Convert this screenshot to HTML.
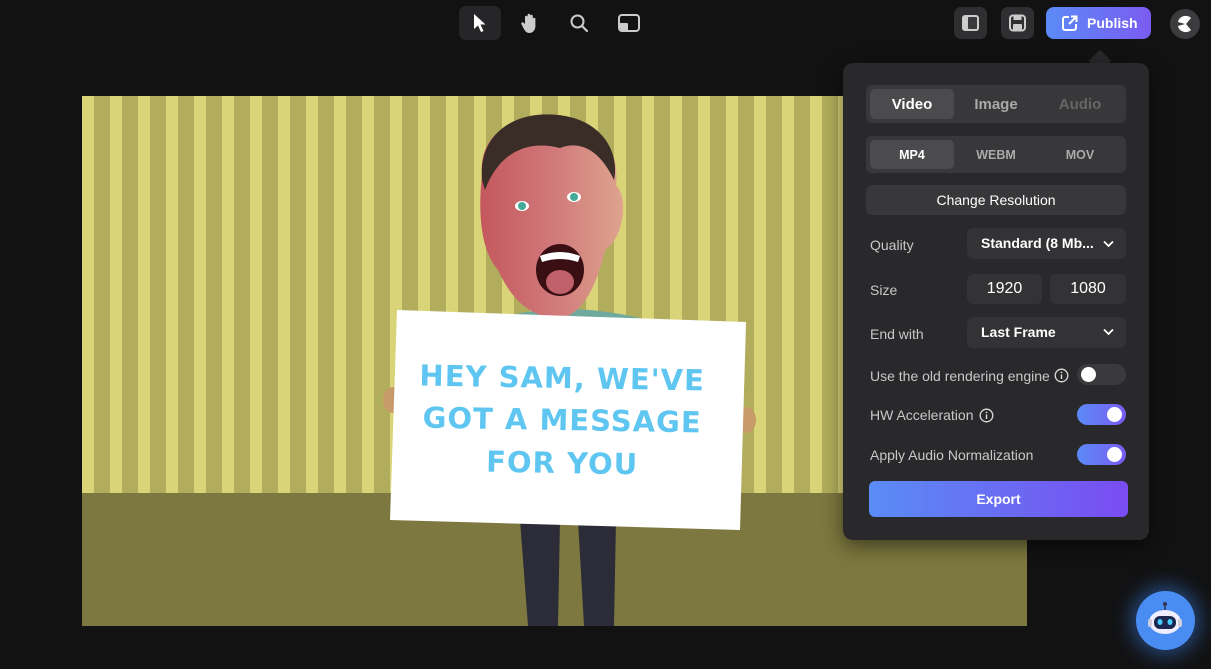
<!DOCTYPE html>
<html><head><meta charset="utf-8"><style>
*{box-sizing:border-box;margin:0;padding:0}
body{width:1211px;height:669px;background:#121213;font-family:"Liberation Sans",sans-serif;position:relative;overflow:hidden;color:#ddd}
.abs{position:absolute}
.canvas{left:82px;top:96px;width:945px;height:530px;background:repeating-linear-gradient(90deg,#d8d477 0 12px,#b2ad5c 12px 28px);overflow:hidden}
.floor{left:0;top:397px;width:945px;height:133px;background:#7d783f}
.tb{border-radius:7px}
.panel{left:843px;top:63px;width:306px;height:477px;background:#29292b;border-radius:10px;box-shadow:0 6px 20px rgba(0,0,0,.5)}
.seg{background:#38383a;border-radius:6px;display:flex;align-items:center;padding:0 4px}
.seg div{flex:1;text-align:center;font-weight:bold;color:#aaa}
.seg .on{background:#4b4b4d;border-radius:5px;color:#fff;align-self:stretch;display:flex;align-items:center;justify-content:center}
.lbl{font-size:14px;color:#c8c8c8}
.box{background:#333335;border-radius:6px;color:#fff}
.tog{width:49px;height:21px;border-radius:11px}
.knob{position:absolute;top:3px;width:15px;height:15px;border-radius:50%;background:#fff}
</style></head><body>

<div class="abs tb" style="left:459px;top:6px;width:42px;height:34px;background:#262628"></div>
<svg class="abs" style="left:472px;top:13px" width="16" height="20" viewBox="0 0 16 20"><path d="M2 1 L2 16 L6 12.5 L9 19 L11.5 18 L8.5 11.5 L13.5 11.5 Z" fill="#fff"/></svg>
<svg class="abs" style="left:520px;top:12px" width="20" height="22" viewBox="0 0 20 22"><path d="M5 12 V5 a1.3 1.3 0 0 1 2.6 0 V10 V3 a1.3 1.3 0 0 1 2.6 0 V10 V4 a1.3 1.3 0 0 1 2.6 0 V11 V7 a1.3 1.3 0 0 1 2.6 0 V14 c0 4 -2.5 7 -6 7 c-3 0 -4.5 -2 -6 -5 l-2 -4 a1.3 1.3 0 0 1 2.2 -1.3 Z" fill="#ccc"/></svg>
<svg class="abs" style="left:569px;top:13px" width="20" height="20" viewBox="0 0 20 20"><circle cx="8.5" cy="8.5" r="6" fill="none" stroke="#ccc" stroke-width="2"/><path d="M13 13 L18 18" stroke="#ccc" stroke-width="2.2" stroke-linecap="round"/></svg>
<svg class="abs" style="left:618px;top:14px" width="22" height="18" viewBox="0 0 22 18"><rect x="1" y="1" width="20" height="16" rx="3" fill="none" stroke="#ccc" stroke-width="2"/><path d="M2 9 H9 a1 1 0 0 1 1 1 V16 H4 a2 2 0 0 1 -2 -2Z" fill="#ccc"/></svg>

<div class="abs tb" style="left:954px;top:7px;width:33px;height:32px;background:#2f2f31"></div>
<svg class="abs" style="left:961px;top:14px" width="19" height="18" viewBox="0 0 19 18"><rect x="1" y="1" width="17" height="16" rx="3" fill="#ccc"/><rect x="7" y="3" width="9" height="12" rx="1" fill="#3a3a3c"/></svg>
<div class="abs tb" style="left:1001px;top:7px;width:33px;height:32px;background:#2f2f31"></div>
<svg class="abs" style="left:1008px;top:14px" width="19" height="18" viewBox="0 0 19 18"><rect x="2" y="1.5" width="15" height="15" rx="3" fill="none" stroke="#ccc" stroke-width="2"/><rect x="5.5" y="2" width="8" height="4" fill="#ccc"/><rect x="5" y="10" width="9" height="6" rx="1" fill="#ccc"/></svg>
<div class="abs tb" style="left:1046px;top:7px;width:105px;height:32px;background:linear-gradient(90deg,#5b8af6,#7a5cf2);border-radius:8px"></div>
<svg class="abs" style="left:1062px;top:15px" width="16" height="16" viewBox="0 0 16 16"><path d="M7 2 H3 a2 2 0 0 0 -2 2 V13 a2 2 0 0 0 2 2 H12 a2 2 0 0 0 2 -2 V9" fill="none" stroke="#fff" stroke-width="2"/><path d="M7 9 L14 2 M9 1.5 H14.5 V7" fill="none" stroke="#fff" stroke-width="2"/></svg>
<div class="abs" style="left:1087px;top:15px;font-size:14px;font-weight:bold;color:#fff">Publish</div>
<div class="abs" style="left:1170px;top:9px;width:30px;height:30px;border-radius:50%;background:#3c3c3e"></div>
<svg class="abs" style="left:1174px;top:13px" width="22" height="22" viewBox="0 0 22 22"><path d="M17 5 C13 1 5 3 4 9 L11 11 L4 13 C5 19 13 21 17 17 L12 11 Z" fill="#fff"/></svg>

<div class="abs canvas">
 <div class="abs floor"></div>
</div>
<svg class="abs" style="left:0;top:0" width="1211" height="669">
 <defs><linearGradient id="sk" x1="0" x2="1"><stop offset="0" stop-color="#c4585e"/><stop offset=".5" stop-color="#d0787a"/><stop offset="1" stop-color="#dea48e"/></linearGradient></defs>
 <path d="M520 520 H560 L558 626 H528Z" fill="#2c2c38"/>
 <path d="M578 520 H616 L614 626 H584Z" fill="#2c2c38"/>
 <path d="M500 318 Q560 300 640 318 L640 330 L500 330Z" fill="#6fa89c"/>
 <ellipse cx="393" cy="400" rx="10" ry="13" fill="#c89a6a"/>
 <ellipse cx="746" cy="420" rx="10" ry="13" fill="#c89a6a"/>
 <path d="M482 175 C478 130 520 112 560 118 C600 122 620 150 616 185 C630 200 622 240 605 250 C596 290 580 316 560 318 C530 318 512 300 498 270 C480 250 478 210 482 175Z" fill="url(#sk)"/>
 <path d="M482 180 C478 130 520 108 565 116 C600 122 620 150 614 180 C600 150 580 140 560 148 C530 140 500 150 485 190Z" fill="#3a2c26"/>
 <ellipse cx="522" cy="206" rx="7" ry="5" fill="#fff"/><circle cx="522" cy="206" r="4" fill="#4a9"/>
 <ellipse cx="574" cy="197" rx="7" ry="5" fill="#fff"/><circle cx="574" cy="197" r="4" fill="#4a9"/>
 <ellipse cx="560" cy="270" rx="24" ry="26" fill="#3a0f14"/>
 <path d="M540 256 Q560 248 580 256 L578 262 Q560 256 542 262Z" fill="#fff"/>
 <ellipse cx="560" cy="282" rx="14" ry="12" fill="#c0606a"/>
 <polygon points="397,310 746,322 740,530 390,520" fill="#fff"/>
 <g font-family="DejaVu Sans,sans-serif" font-weight="bold" font-size="29" fill="#5ec6f0" text-anchor="middle" letter-spacing="1">
  <text x="562" y="388" transform="rotate(1 562 388)">HEY SAM, WE'VE</text>
  <text x="562" y="430" transform="rotate(1 562 430)">GOT A MESSAGE</text>
  <text x="562" y="473" transform="rotate(1 562 473)">FOR YOU</text>
 </g>
</svg>

<div class="abs" style="left:1092px;top:53px;width:16px;height:16px;background:#29292b;transform:rotate(45deg)"></div>
<div class="abs panel"></div>
<div class="abs seg" style="left:866px;top:85px;width:260px;height:38px;font-size:15px">
 <div class="on" style="margin:4px 0">Video</div><div>Image</div><div style="color:#666">Audio</div>
</div>
<div class="abs seg" style="left:866px;top:136px;width:260px;height:37px;font-size:12.5px">
 <div class="on" style="margin:4px 0">MP4</div><div>WEBM</div><div>MOV</div>
</div>
<div class="abs box" style="left:866px;top:185px;width:260px;height:30px;text-align:center;line-height:30px;font-size:14px;background:#38383a">Change Resolution</div>

<div class="abs lbl" style="left:870px;top:237px">Quality</div>
<div class="abs box" style="left:967px;top:228px;width:159px;height:31px;font-size:14px;font-weight:bold;line-height:31px;padding-left:14px">Standard (8 Mb...</div>
<svg class="abs" style="left:1103px;top:240px" width="11" height="8"><path d="M1 1.5 L5.5 6 L10 1.5" fill="none" stroke="#fff" stroke-width="1.8"/></svg>

<div class="abs lbl" style="left:870px;top:282px">Size</div>
<div class="abs box" style="left:967px;top:274px;width:75px;height:30px;font-size:16px;text-align:center;line-height:30px">1920</div>
<div class="abs box" style="left:1050px;top:274px;width:76px;height:30px;font-size:16px;text-align:center;line-height:30px">1080</div>

<div class="abs lbl" style="left:870px;top:326px">End with</div>
<div class="abs box" style="left:967px;top:317px;width:159px;height:31px;font-size:14px;font-weight:bold;line-height:31px;padding-left:14px">Last Frame</div>
<svg class="abs" style="left:1103px;top:328px" width="11" height="8"><path d="M1 1.5 L5.5 6 L10 1.5" fill="none" stroke="#fff" stroke-width="1.8"/></svg>

<div class="abs lbl" style="left:870px;top:368px">Use the old rendering engine</div>
<svg class="abs" style="left:1054px;top:368px" width="15" height="15"><circle cx="7.5" cy="7.5" r="6.3" fill="none" stroke="#ddd" stroke-width="1.3"/><rect x="6.8" y="6.5" width="1.4" height="4.5" fill="#ddd"/><circle cx="7.5" cy="4.5" r=".9" fill="#ddd"/></svg>
<div class="abs tog" style="left:1077px;top:364px;background:#3a3a3c"><div class="knob" style="left:4px"></div></div>

<div class="abs lbl" style="left:870px;top:407px">HW Acceleration</div>
<svg class="abs" style="left:979px;top:408px" width="15" height="15"><circle cx="7.5" cy="7.5" r="6.3" fill="none" stroke="#ddd" stroke-width="1.3"/><rect x="6.8" y="6.5" width="1.4" height="4.5" fill="#ddd"/><circle cx="7.5" cy="4.5" r=".9" fill="#ddd"/></svg>
<div class="abs tog" style="left:1077px;top:404px;background:linear-gradient(90deg,#5b8af6,#7a5cf2)"><div class="knob" style="left:30px"></div></div>

<div class="abs lbl" style="left:870px;top:447px">Apply Audio Normalization</div>
<div class="abs tog" style="left:1077px;top:444px;background:linear-gradient(90deg,#5b8af6,#7a5cf2)"><div class="knob" style="left:30px"></div></div>

<div class="abs" style="left:869px;top:481px;width:259px;height:36px;border-radius:6px;background:linear-gradient(90deg,#5a8cf6,#6a6af2 55%,#7a4cf2);color:#fff;font-weight:bold;font-size:14px;text-align:center;line-height:36px">Export</div>

<div class="abs" style="left:1136px;top:591px;width:59px;height:59px;border-radius:50%;background:#4a8df2;box-shadow:0 0 18px 6px rgba(60,130,240,.45)"></div>
<svg class="abs" style="left:1144px;top:600px" width="42" height="42" viewBox="0 0 42 42"><line x1="21" y1="4" x2="21" y2="10" stroke="#335" stroke-width="1.5"/><circle cx="21" cy="4" r="2" fill="#335"/><ellipse cx="21" cy="22" rx="16" ry="12" fill="#eef"/><rect x="4" y="19" width="4" height="8" rx="2" fill="#ccd"/><rect x="34" y="19" width="4" height="8" rx="2" fill="#ccd"/><rect x="10" y="16" width="22" height="13" rx="6" fill="#1c2750"/><ellipse cx="16" cy="22" rx="2.5" ry="3" fill="#4cf"/><ellipse cx="26" cy="22" rx="2.5" ry="3" fill="#4cf"/></svg>
</body></html>
